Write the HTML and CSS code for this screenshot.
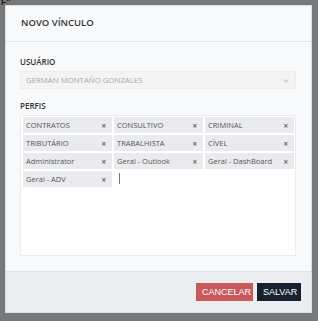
FILE: index.html
```html
<!DOCTYPE html>
<html lang="pt">
<head>
    <meta charset="UTF-8">
    <meta name="viewport" content="width=device-width, initial-scale=1.0">
    <title>Novo Vínculo</title>
<link rel="stylesheet" href="styles.css">
</head>
<body>
<div class="page-behind">F''</div>

<div class="backdrop">
  <div class="dialog">
    <div class="dialog-head">
      <span class="dialog-title">NOVO VÍNCULO</span>
    </div>

    <div class="dialog-body">
      <label class="field-label">USUÁRIO</label>
      <div class="select disabled">
        <span>GERMÁN MONTAÑO GONZALES</span>
        <svg class="chevron" width="6" height="4" viewBox="0 0 6 4"><path d="M0.5 0.5 L3 3 L5.5 0.5" fill="none" stroke="#c8c8c8" stroke-width="1.2"/></svg>
      </div>

      <label class="field-label">PERFIS</label>
      <ul class="tags">
        <li class="tag">CONTRATOS<span class="remove">×</span></li>
        <li class="tag">CONSULTIVO<span class="remove">×</span></li>
        <li class="tag">CRIMINAL<span class="remove">×</span></li>
        <li class="tag">TRIBUTÁRIO<span class="remove">×</span></li>
        <li class="tag">TRABALHISTA<span class="remove">×</span></li>
        <li class="tag">CÍVEL<span class="remove">×</span></li>
        <li class="tag">Administrator<span class="remove">×</span></li>
        <li class="tag">Geral - Outlook<span class="remove">×</span></li>
        <li class="tag">Geral - DashBoard<span class="remove">×</span></li>
        <li class="tag">Geral - ADV<span class="remove">×</span></li>
        <li class="cursor"></li>
      </ul>
    </div>

    <div class="dialog-foot">
      <button class="btn btn-cancel">CANCELAR</button>
      <button class="btn btn-save">SALVAR</button>
    </div>
  </div>
</div>
</body>
</html>
```

FILE: styles.css
```css
* {
  box-sizing: border-box;
}

body {
  margin: 0;
  background-color: #777879;
  font-family: 'Open Sans', sans-serif;
  width: 318px;
  height: 321px;
  overflow: hidden;
}

.page-behind {
  position: absolute;
  top: -3px;
  left: 1px;
  font-family: 'Liberation Sans', sans-serif;
  font-size: 9px;
  font-weight: bold;
  color: #222;
}

.backdrop {
  padding: 5px 0 0 5px;
}

.dialog {
  width: 307px;
  height: 308px;
  background-color: #f8f9fb;
  border: 1px solid #dcdde0;
  display: flex;
  flex-direction: column;
}

.dialog-head {
  height: 36px;
  border-bottom: 1px solid #e3e4e8;
  padding: 11px 14px 0 15px;
}

.dialog-title {
  display: block;
  font-size: 9.5px;
  line-height: 12px;
  font-weight: 600;
  color: #333;
}

.dialog-body {
  flex: 1;
  padding: 14px 15px 15px 14px;
  display: flex;
  flex-direction: column;
}

.field-label {
  font-size: 8px;
  font-weight: 600;
  color: #333;
  line-height: 11px;
  margin-bottom: 4px;
}

.select {
  height: 18px;
  border: 1px solid #ececec;
  background-color: #f4f4f5;
  display: flex;
  align-items: center;
  justify-content: space-between;
  padding: 0 6px 0 5px;
  margin-bottom: 11px;
}

.select span {
  font-size: 7.8px;
  color: #a8a8a8;
}

.chevron {
  margin-top: 1px;
}

.tags {
  flex: 1;
  margin: 0;
  list-style: none;
  background-color: #fff;
  border: 1px solid #ececec;
  padding: 1px 0 0 2px;
  display: flex;
  flex-wrap: wrap;
  align-content: flex-start;
  gap: 2px;
}

.tag {
  width: 89px;
  height: 16px;
  background-color: #e9ebef;
  display: flex;
  align-items: center;
  justify-content: space-between;
  padding: 0 6px 0 3px;
  font-size: 7.5px;
  color: #555;
}

.remove {
  font-size: 8px;
  font-weight: bold;
  color: #666;
}

.cursor {
  width: 1px;
  height: 11px;
  background-color: #777;
  margin: 2px 0 0 5px;
}

.dialog-foot {
  height: 41px;
  border-top: 1px solid #e2e3e7;
  background-color: #ecedf1;
  display: flex;
  justify-content: flex-end;
  align-items: flex-start;
  padding: 11px 10px 0 0;
  gap: 4px;
}

.btn {
  height: 18px;
  border: none;
  font-family: 'Liberation Sans', sans-serif;
  font-size: 9px;
  color: #fff;
  padding: 0 6px;
  cursor: pointer;
}

.btn-cancel {
  background-color: #c9595b;
  width: 57px;
}

.btn-save {
  background-color: #16222f;
  width: 44px;
}
```
